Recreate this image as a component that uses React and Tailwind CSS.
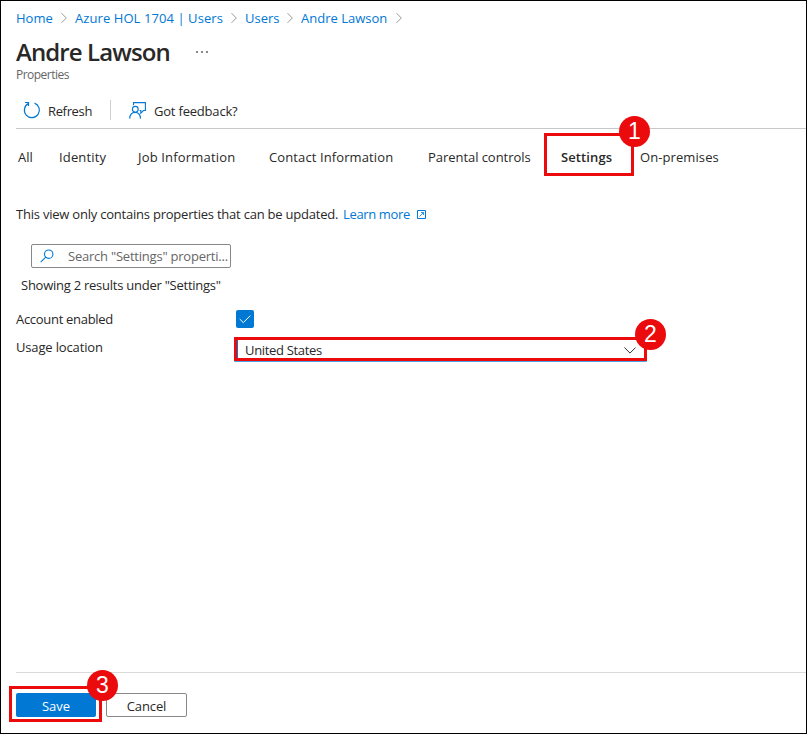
function Chevron() {
  return (
    <svg className="h-3 w-2 shrink-0" viewBox="0 0 8 12" fill="none" stroke="#9a9a9a" strokeWidth="1">
      <path d="M1.5 1.2 6.3 6 1.5 10.8" />
    </svg>
  );
}

function Badge({ children, className }) {
  return (
    <span
      className={`absolute flex size-[31px] items-center justify-center rounded-full bg-[#eb0a0c] font-['Liberation_Sans',Arial,sans-serif] text-[23px] leading-none font-normal tracking-normal text-white ${className}`}
    >
      {children}
    </span>
  );
}

function Breadcrumb() {
  return (
    <nav className="flex h-[34px] items-center pl-[15px] text-[#0078d4]">
      <a className="flex w-[59px] items-center"><span className="w-[44px]">Home</span><Chevron /></a>
      <a className="flex w-[170px] items-center tracking-[0.08px]"><span className="w-[155px]">Azure HOL 1704 | Users</span><Chevron /></a>
      <a className="flex w-[56px] items-center"><span className="w-[41px]">Users</span><Chevron /></a>
      <a className="flex items-center"><span className="w-[94px]">Andre Lawson</span><Chevron /></a>
    </nav>
  );
}

function Toolbar() {
  return (
    <div className="ml-[15px] flex h-[46px] items-center border-b border-[#c8c8c8] pt-[9px] text-[#292827]">
      <svg className="ml-[7px] size-[18px]" viewBox="0 0 18 18" fill="none" stroke="#0078d4" strokeWidth="1.2">
        <path d="M11.5 2.1A7.5 7.5 0 1 1 5.6 2.4M2 1.5H5.5V5" />
      </svg>
      <span className="mt-[2px] ml-[7px] w-[62px] tracking-[-0.35px]">Refresh</span>
      <span className="h-5 w-px bg-[#d2d0ce]" />
      <svg className="ml-[18px] size-[17px]" viewBox="0 0 17 17" fill="none" stroke="#0078d4" strokeWidth="1.1">
        <path d="M4.5 3.2V.6h11.9v7.9h-2l-2.6 2.6V8.5h-1.2" />
        <circle cx="6.3" cy="7.3" r="2.9" />
        <path d="M.7 16.6c.2-4 2.2-6.2 5.4-6.2s5.2 2.2 5.4 6.2" />
      </svg>
      <span className="mt-[2px] ml-[8px] tracking-[-0.2px]">Got feedback?</span>
    </div>
  );
}

function Tabs() {
  return (
    <div className="flex h-[56px] items-center pl-[17px] text-[#292827]">
      <span className="w-[41px]">All</span>
      <span className="w-[79px] tracking-[0.15px]">Identity</span>
      <span className="w-[131px] tracking-[0.17px]">Job Information</span>
      <span className="w-[159px] tracking-[0.11px]">Contact Information</span>
      <span className="w-[116px] tracking-[-0.05px]">Parental controls</span>
      <span className="relative -mt-[5px] flex h-[43px] w-[90px] items-center border-[3px] border-[#eb0a0c] pt-[5px] pl-[14px] font-semibold tracking-[0.1px]">
        Settings
        <Badge className="-top-[20px] left-[72px]">1</Badge>
      </span>
      <span className="ml-[6px] tracking-[0.09px]">On-premises</span>
    </div>
  );
}

export default function App() {
  return (
    <div className="flex h-[734px] w-[807px] flex-col overflow-hidden border border-black bg-white font-['Open_Sans','Noto_Sans',sans-serif] text-[13px] leading-[18px] whitespace-nowrap text-[#292827]">
      <Breadcrumb />
      <div className="flex h-[32px] items-center pl-[15px]">
        <h1 className="mt-px w-[180px] text-[24px] leading-8 font-semibold tracking-[-0.9px]">Andre Lawson</h1>
        <span className="mt-[2px] flex gap-[3px]">
          <i className="size-[2px] bg-[#888]" />
          <i className="size-[2px] bg-[#888]" />
          <i className="size-[2px] bg-[#888]" />
        </span>
      </div>
      <p className="h-[16px] pl-[15px] text-[12px] leading-[16px] tracking-[-0.52px] text-[#666]">Properties</p>
      <Toolbar />
      <Tabs />
      <div className="mt-[20px] flex items-center pl-[15px]">
        <span className="w-[327px] tracking-[-0.22px]">This view only contains properties that can be updated.</span>
        <a className="w-[73px] tracking-[-0.35px] text-[#0078d4]">Learn more</a>
        <svg className="ml-px size-[9px]" viewBox="0 0 9 9" fill="none" stroke="#0078d4">
          <path d="M.5.5h8v8h-8z" />
          <path d="M2.5 6.5l4-4M4 2.5h2.5V5" strokeWidth=".8" />
        </svg>
      </div>
      <div className="mt-[21px] ml-[30px] flex h-6 w-[200px] items-center rounded-[2px] border border-[#8a8886] pl-[8px] text-[#666]">
        <svg className="-mt-px size-[14px] shrink-0" viewBox="0 0 14 14" fill="none" stroke="#0078d4" strokeWidth="1.1">
          <circle cx="8.7" cy="5.2" r="4.2" />
          <path d="M5.7 8.2.7 13.2" />
        </svg>
        <span className="ml-[14px] tracking-[-0.22px]">Search "Settings" properti...</span>
      </div>
      <p className="mt-[8px] pl-[20px] tracking-[-0.25px]">Showing 2 results under "Settings"</p>
      <div className="mt-[16px] flex h-[18px] items-center pl-[15px]">
        <span className="w-[220px] tracking-[-0.3px]">Account enabled</span>
        <span className="flex size-[18px] items-center justify-center rounded-[2px] bg-[#0078d4]">
          <svg className="size-3" viewBox="0 0 12 12" fill="none" stroke="white">
            <path d="M.7 6 4.3 9.6 11.3 2.6" />
          </svg>
        </span>
      </div>
      <div className="mt-[9px] flex h-6 items-center pl-[15px]">
        <span className="-mt-[5px] w-[218px] tracking-[-0.15px]">Usage location</span>
        <div className="relative h-6 w-[413px] border-[3px] border-[#eb0a0c] shadow-[0_1px_0_-0.3px_#0078d4]">
          <div className="flex h-full items-center border-l border-[#0078d4] pt-[2px] pr-[8px] pl-[7px]">
            <span className="flex-1 tracking-[-0.33px]">United States</span>
            <svg className="h-[7px] w-3" viewBox="0 0 12 7" fill="none" stroke="#333">
              <path d="M.4.5 6 6.1 11.6.5" />
            </svg>
          </div>
          <Badge className="-top-[21px] left-[398px]">2</Badge>
        </div>
      </div>
      <footer className="mt-auto ml-[15px] flex h-[61px] border-t border-[#dadada] pt-[13px]">
        <div className="relative -ml-[7px] h-9 w-[93px] border-[3px] border-[#eb0a0c] pt-[4px] pl-[4px]">
          <button className="flex h-6 w-20 items-center justify-center rounded-[2px] bg-[#0078d4] pt-[2px] text-white">Save</button>
          <Badge className="-top-[19px] left-[75px]">3</Badge>
        </div>
        <button className="mt-[7px] ml-[4px] flex h-6 w-[81px] items-center justify-center rounded-[2px] border border-[#8a8886] pt-[2px] tracking-[-0.1px]">Cancel</button>
      </footer>
    </div>
  );
}
